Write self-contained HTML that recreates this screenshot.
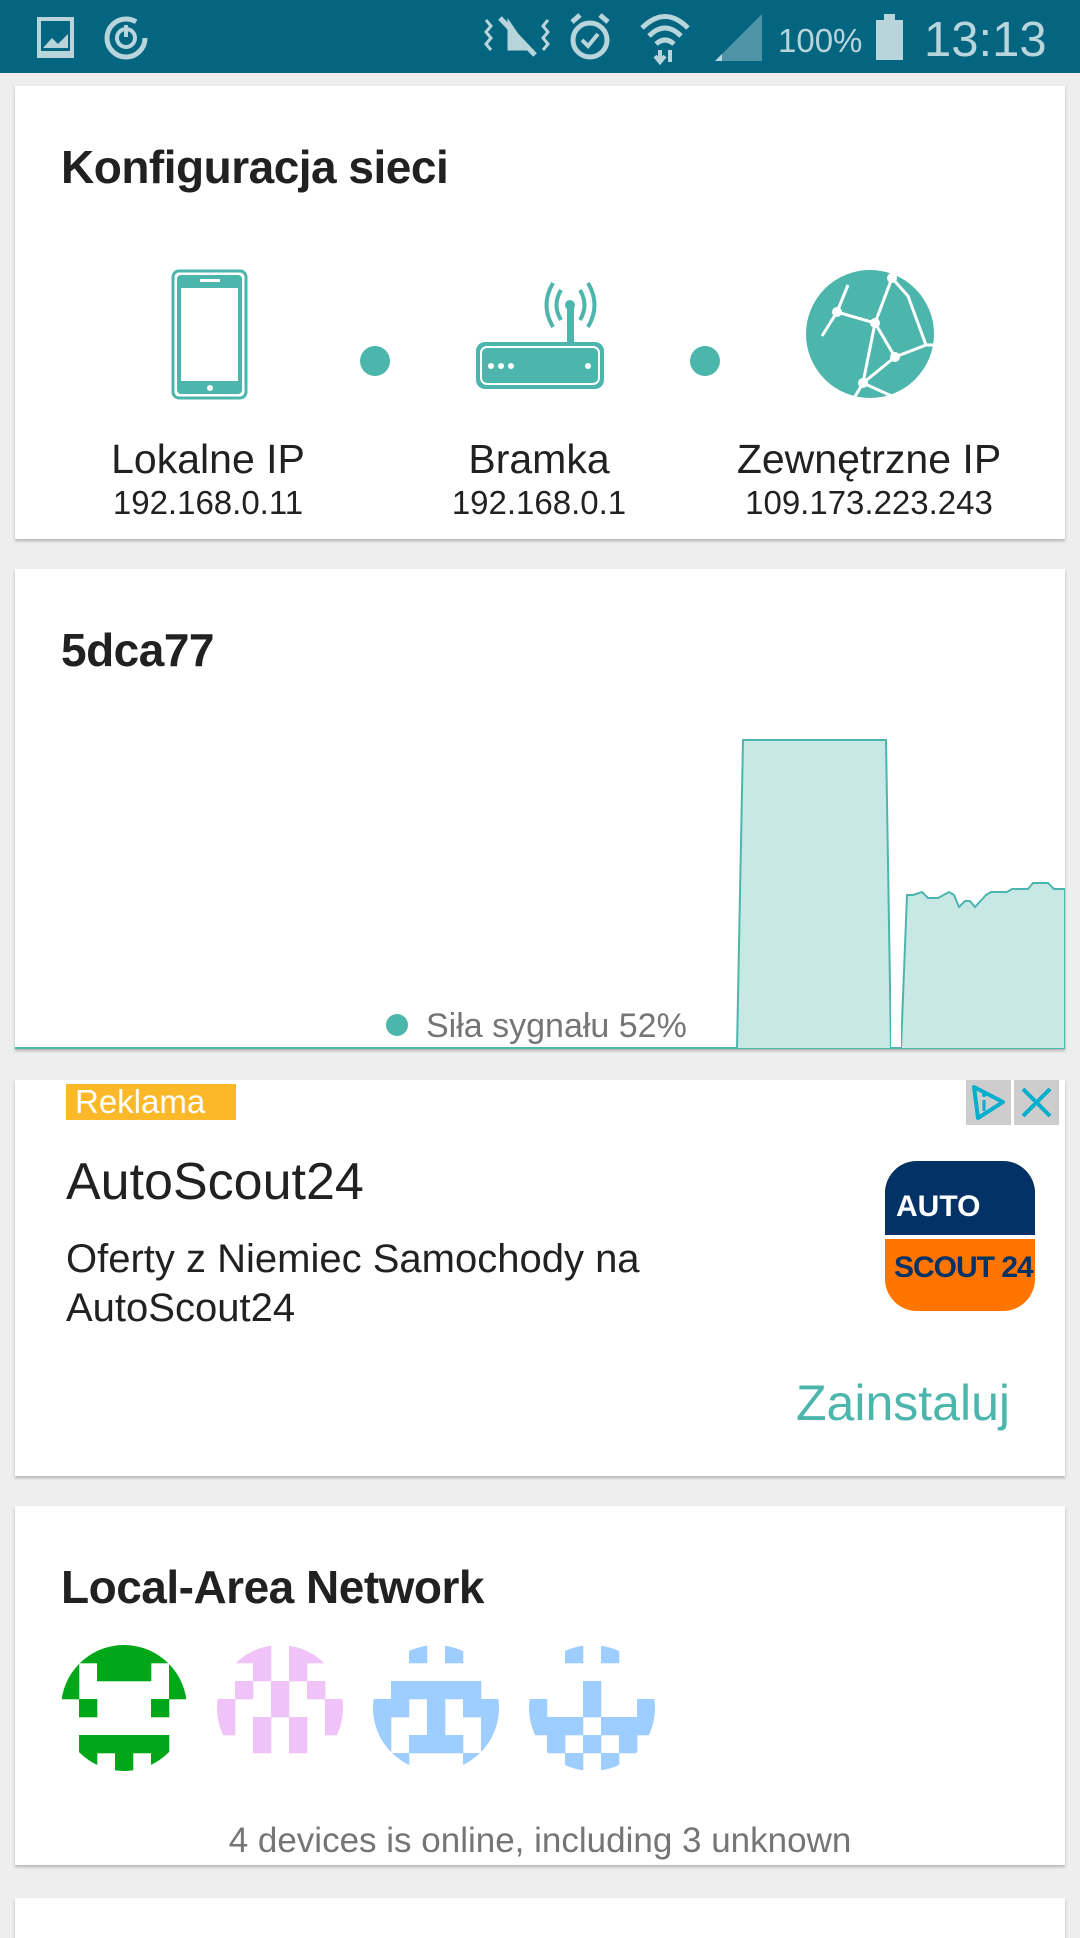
<!DOCTYPE html>
<html><head><meta charset="utf-8"><style>
*{margin:0;padding:0;box-sizing:border-box}
body{width:1080px;height:1920px;background:#eeeeee;font-family:"Liberation Sans",sans-serif;position:relative;overflow:hidden}
.sb{position:absolute;left:0;top:0;width:1080px;height:73px;background:#03657f}
.card{position:absolute;left:15px;width:1050px;background:#fff;box-shadow:0 2px 3px rgba(0,0,0,.25)}
.t{position:absolute;font-weight:bold;color:#212121;font-size:46px;letter-spacing:-0.5px}
.c{position:absolute;text-align:center;color:#212121;width:300px;white-space:nowrap}
.a{position:absolute;white-space:nowrap}
</style></head><body>
<div class="sb">
<svg width="1080" height="73" style="position:absolute;left:0;top:0">
<rect x="37" y="17" width="37" height="41" fill="#b9d5dc"/><rect x="41" y="21" width="29" height="30" fill="#03657f"/><path d="M43 48 L52 38 L58 44 L68 34 L68 48Z" fill="#b9d5dc"/>
<circle cx="126" cy="38" r="19" fill="none" stroke="#b9d5dc" stroke-width="5" stroke-dasharray="100 20"/><circle cx="126" cy="38" r="9" fill="none" stroke="#b9d5dc" stroke-width="4"/><line x1="126" y1="25" x2="126" y2="37" stroke="#b9d5dc" stroke-width="4"/>
<path d="M500 18 L535 55 M510 26 L510 48 L525 48 Z" stroke="#b9d5dc" stroke-width="5" fill="#b9d5dc"/><path d="M486 20 l5 6 -5 6 5 6 -5 6 5 6 M548 20 l-5 6 5 6 -5 6 5 6 -5 6" stroke="#b9d5dc" stroke-width="3" fill="none"/>
<circle cx="590" cy="40" r="17" fill="none" stroke="#b9d5dc" stroke-width="5"/><path d="M582 40 l6 6 10 -12" stroke="#b9d5dc" stroke-width="4" fill="none"/><path d="M572 22 l8-7 M608 22 l-8-7" stroke="#b9d5dc" stroke-width="5"/>
<path d="M642 28 Q665 5 688 28 M649 36 Q665 20 681 36 M656 44 Q665 36 674 44" stroke="#b9d5dc" stroke-width="5" fill="none"/><path d="M660 50 v12 M670 50 v12 M655 56 l5 6 5-6" stroke="#b9d5dc" stroke-width="4" fill="none"/>
<path d="M715 61 L762 14 L762 61Z" fill="#4f94a6"/><path d="M715 61 L722 54 L722 61Z" fill="#b9d5dc"/>
<text x="778" y="52" font-size="33" fill="#b9d5dc" font-family="Liberation Sans">100%</text>
<rect x="876" y="20" width="27" height="40" fill="#b9d5dc"/><rect x="884" y="14" width="11" height="7" fill="#b9d5dc"/>
<text x="924" y="56" font-size="49" fill="#b9d5dc" font-family="Liberation Sans">13:13</text>
</svg></div>

<div class="card" style="top:86px;height:453px">
<div class="t" style="left:46px;top:54px">Konfiguracja sieci</div>
<svg class="a" style="left:0;top:0" width="1050" height="453">
<g transform="translate(-15,-86)" fill="#4db6ac">
<rect x="173" y="271" width="73" height="127" rx="6" fill="none" stroke="#4db6ac" stroke-width="3"/><rect x="177" y="275" width="65" height="119" rx="4" fill="#4db6ac"/><rect x="181" y="288" width="57" height="93" fill="#fff"/><circle cx="210" cy="388" r="3" fill="#fff"/><rect x="200" y="279" width="20" height="3" fill="#fff"/>
<circle cx="375" cy="361" r="15"/><circle cx="705" cy="361" r="15"/>
<path d="M561 290 Q552 305 561 320 M580 290 Q589 305 580 320 M553 283 Q540 305 553 327 M588 283 Q601 305 588 327" stroke="#4db6ac" stroke-width="4" fill="none"/><circle cx="570" cy="305" r="5"/><rect x="567" y="305" width="7" height="37"/>
<rect x="476" y="342" width="128" height="47" rx="9"/><rect x="481" y="347" width="118" height="37" rx="6" fill="none" stroke="#fff" stroke-width="2"/><circle cx="491" cy="366" r="3" fill="#fff"/><circle cx="501" cy="366" r="3" fill="#fff"/><circle cx="511" cy="366" r="3" fill="#fff"/><circle cx="588" cy="366" r="3" fill="#fff"/>
<circle cx="870" cy="334" r="64"/>
<path d="M892 278 L875 323 L837 312 L822 336 M875 323 L895 357 L926 345 M895 357 L863 383 L850 405 M875 323 L863 383 M892 278 L900 272 M892 278 L908 296 L926 345 M837 312 L848 285 M863 383 L896 398 M926 345 L935 345" stroke="#fff" stroke-width="3" fill="none"/>
<circle cx="892" cy="278" r="5" fill="#fff"/><circle cx="875" cy="323" r="5" fill="#fff"/><circle cx="837" cy="312" r="5" fill="#fff"/><circle cx="895" cy="357" r="5" fill="#fff"/><circle cx="863" cy="383" r="5" fill="#fff"/>
</g></svg>
<div class="c" style="left:43px;top:350px;font-size:41px">Lokalne IP</div>
<div class="c" style="left:43px;top:398px;font-size:33px">192.168.0.11</div>
<div class="c" style="left:374px;top:350px;font-size:41px">Bramka</div>
<div class="c" style="left:374px;top:398px;font-size:33px">192.168.0.1</div>
<div class="c" style="left:679px;top:350px;font-size:41px;width:350px">Zewnętrzne IP</div>
<div class="c" style="left:679px;top:398px;font-size:33px;width:350px">109.173.223.243</div>
</div>

<div class="card" style="top:569px;height:480px">
<div class="t" style="left:46px;top:54px">5dca77</div>
<svg class="a" style="left:0;top:0" width="1050" height="480">
<g transform="translate(-15,-569)">
<path d="M15 1048 L737 1048 L743 740 L886 740 L891 1048 L901 1048 L907 895 L913 895 L922 892 L928 898 L938 898 L949 892 L954 895 L959 907 L965 901 L970 901 L975 907 L986 895 L991 892 L1007 892 L1012 889 L1028 889 L1033 883 L1048 883 L1054 889 L1065 889 L1065 1049 L15 1049Z" fill="#c7e8e5" stroke="#4db6ac" stroke-width="2"/>
<rect x="891" y="740" width="10" height="307" fill="#fff"/>
<circle cx="397" cy="1025" r="11" fill="#4db6ac"/>
<text x="426" y="1037" font-size="34" fill="#757575" font-family="Liberation Sans">Siła sygnału 52%</text>
</g></svg>
</div>

<div class="card" style="top:1080px;height:396px">
<div class="a" style="left:51px;top:4px;width:170px;height:36px;background:#fbb829;color:#fff;font-size:33px;line-height:36px;padding-left:9px">Reklama</div>
<div class="a" style="left:951px;top:0;width:45px;height:45px;background:#cdcdcd"><svg width="45" height="45"><path d="M8 7 L37 22 L12 38 Z" fill="none" stroke="#00aecd" stroke-width="4" stroke-linejoin="round"/><path d="M18 20 v11" stroke="#00aecd" stroke-width="3"/><circle cx="18" cy="15" r="2" fill="#00aecd"/></svg></div>
<div class="a" style="left:999px;top:0;width:45px;height:45px;background:#cdcdcd"><svg width="45" height="45"><path d="M9 9 L36 36 M36 9 L9 36" stroke="#00aecd" stroke-width="4"/></svg></div>
<div class="a" style="left:51px;top:72px;font-size:52px;color:#212121">AutoScout24</div>
<div class="a" style="left:51px;top:155px;font-size:40px;color:#212121;line-height:49px">Oferty z Niemiec Samochody na<br>AutoScout24</div>
<div class="a" style="left:870px;top:81px;width:150px;height:150px;border-radius:32px;overflow:hidden;background:#ff7500">
<div style="height:74px;background:#033266;color:#fff;font-weight:bold;font-size:30px;padding:29px 0 0 11px;font-family:'Liberation Sans Narrow','Liberation Sans',sans-serif">AUTO</div>
<div style="height:4px;background:#fff"></div>
<div style="color:#033266;font-weight:bold;font-size:30px;padding:12px 0 0 9px;font-family:'Liberation Sans Narrow','Liberation Sans',sans-serif;letter-spacing:-1px;white-space:nowrap">SCOUT 24</div>
</div>
<div class="a" style="right:55px;top:294px;font-size:50px;color:#4db6ac">Zainstaluj</div>
</div>

<div class="card" style="top:1506px;height:359px">
<div class="t" style="left:46px;top:54px">Local-Area Network</div>
<svg class="a" style="left:46px;top:139px" width="600" height="126">
<defs><clipPath id="cp"><circle cx="63" cy="63" r="63"/></clipPath></defs>
<g id="av"></g>
</svg>
<div class="c" style="left:0;width:1050px;top:315px;font-size:35px;color:#757575">4 devices is online, including 3 unknown</div>
</div>
<div class="card" style="top:1898px;height:40px"></div>
<script>
var grids=[["#00a819",["1111111","1011101","1000001","0100010","0000000","0111110","0101010"]],
["#efc2f8",["0110110","0010100","0101010","1001001","1010101","0010100","0000000"]],
["#9ecdff",["0010100","0000000","0111110","1101011","1001001","1011101","0100010"]],
["#9ecdff",["0010100","0000000","0001000","1001001","1110111","0101010","0010100"]]];
var s="";grids.forEach(function(g,i){s+='<g transform="translate('+(i*156)+',0)"><g clip-path="url(#cp)">';
g[1].forEach(function(r,y){for(var x=0;x<7;x++)if(r[x]=="1")s+='<rect x="'+(x*18)+'" y="'+(y*18)+'" width="18.3" height="18.3" fill="'+g[0]+'"/>';});s+='</g></g>';});
document.getElementById("av").innerHTML=s;
</script>
</body></html>
